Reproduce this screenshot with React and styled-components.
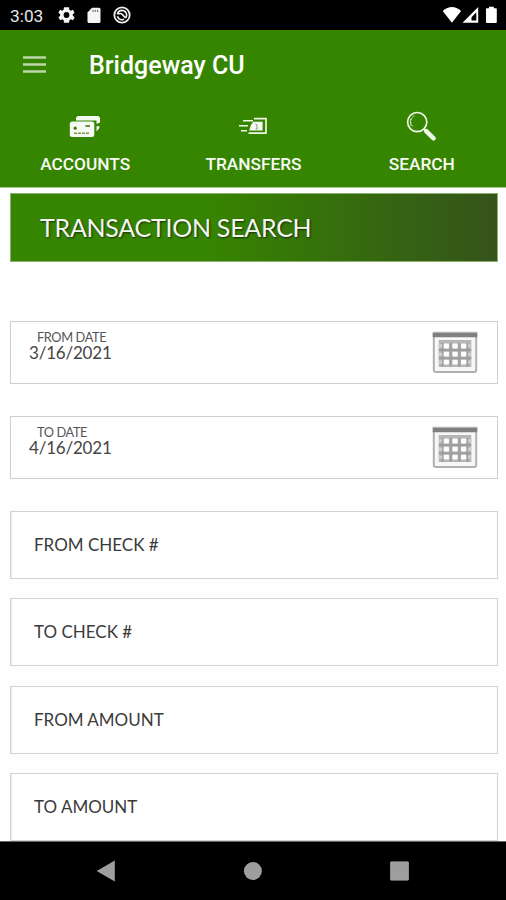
import React from "react";
import styled, { createGlobalStyle } from "styled-components";

const GlobalStyle = createGlobalStyle`
  * { box-sizing: border-box; }
  body { margin: 0; background: #fff; }
  svg { display: block; flex: none; }
`;

const Screen = styled.div`
  width: 506px;
  height: 900px;
  display: flex;
  flex-direction: column;
  overflow: hidden;
  background: #fefefe;
  font-family: Lato, "Liberation Sans", sans-serif;
`;

const StatusBar = styled.div`
  height: 30px;
  flex: none;
  display: flex;
  align-items: center;
  justify-content: space-between;
  padding: 0 8px 0 10px;
  background: #000;
`;

const Clock = styled.span`
  width: 36px;
  padding-top: 2px;
  font: 400 17.3px/20px Roboto, sans-serif;
  color: #e8e8e8;
`;

const StatusGroup = styled.div`
  display: flex;
  align-items: center;
  gap: 12px;
`;

const Header = styled.header`
  height: 158px;
  flex: none;
  background: #368500;
  border-bottom: 1px solid #a9c795;
`;

const TitleRow = styled.div`
  height: 70px;
  display: flex;
  align-items: center;
  padding: 0 23px;
  gap: 43px;
  svg { margin-top: -2px; }
`;

const AppTitle = styled.h1`
  margin: 1px 0 0;
  font: 500 25px/30px Roboto, sans-serif;
  color: #fff;
  white-space: nowrap;
`;

const Tabs = styled.nav`
  display: grid;
  grid-template-columns: repeat(3, 1fr);
  padding-left: 1px;
`;

const Tab = styled.div`
  display: flex;
  flex-direction: column;
  align-items: center;
  padding-top: 8px;
  font: 500 17.3px/20px Roboto, sans-serif;
  color: #f7faf5;
  svg { margin-bottom: 10px; }
`;

const Banner = styled.h2`
  height: 69px;
  flex: none;
  margin: 5px 8px 0 10px;
  padding: 0 29px;
  border: 1px solid #8bb06f;
  background: linear-gradient(90deg, #368500 0%, #368500 40%, #35531b 100%);
  font-weight: 400;
  font-size: 25px;
  line-height: 66px;
  letter-spacing: -0.27px;
  color: #f4f6f2;
  text-shadow: 1px 1px 2px rgba(0, 0, 0, 0.65);
  white-space: nowrap;
`;

const Form = styled.form`
  flex: 1;
  min-height: 0;
  padding: 59px 8px 0 10px;
`;

const DateField = styled.div`
  height: 63px;
  margin-bottom: 32px;
  padding: 0 18px;
  border: 1px solid #cfcfcf;
  background: #fff;
  display: flex;
  align-items: flex-start;
  justify-content: space-between;
  svg { margin-top: 8px; }
`;

const DateLabel = styled.div`
  margin: 8px 0 0 8px;
  font-size: 12.8px;
  line-height: 14px;
  letter-spacing: -0.4px;
  color: #555;
`;

const DateValue = styled.div`
  font-size: 17px;
  line-height: 18px;
  letter-spacing: -0.2px;
  color: #454545;
`;

const TextField = styled.div`
  height: 68px;
  margin-bottom: 19.3px;
  padding-left: 23px;
  border: 1px solid #d2d2d2;
  box-shadow: inset 1px 0 0 #eee;
  background: #fff;
  font-size: 17px;
  line-height: 66px;
  color: #3b3b3b;
`;

const NavBar = styled.footer`
  height: 59px;
  flex: none;
  display: flex;
  align-items: center;
  justify-content: space-between;
  padding: 0 97px 0 96px;
  background: #000;
  border-top: 1px solid #666;
`;

const Gear = () => (
  <svg width="17" height="18" viewBox="2 2 20 20" fill="#f5f5f5">
    <path fillRule="evenodd" d="M19.4 13a7.6 7.6 0 0 0 0-2l2.1-1.6-2-3.5-2.5 1a7.3 7.3 0 0 0-1.7-1L15 3H9l-.4 2.9a7.3 7.3 0 0 0-1.7 1l-2.5-1-2 3.5L4.6 11a7.6 7.6 0 0 0 0 2l-2.1 1.6 2 3.5 2.5-1a7.3 7.3 0 0 0 1.7 1L9 21h6l.4-2.9a7.3 7.3 0 0 0 1.7-1l2.5 1 2-3.5zM12 15.4a3.4 3.4 0 1 1 0-6.8 3.4 3.4 0 0 1 0 6.8" />
  </svg>
);

const SdCard = () => (
  <svg width="14" height="17" viewBox="0 0 14 17">
    <path d="M5 .7h7q1.5 0 1.5 1.5v12.3q0 1.5-1.5 1.5H2q-1.5 0-1.5-1.5V5.5z" fill="#f5f5f5" />
    <path d="M6 2.8v2.3M8.3 2.8v2.3M10.6 2.8v2.3" stroke="#777" strokeWidth="1.2" />
  </svg>
);

const SyncCircle = () => (
  <svg width="18" height="18" viewBox="0 0 18 18" fill="none" stroke="#eee">
    <circle cx="9" cy="9" r="7.7" strokeWidth="1.8" />
    <path d="M4.3 8.3Q5 4.6 9 4.4q4.2.3 4.7 4.7-.2 1.6-1.2 2.9M4.5 10.2q1 3.6 4.8 3.5l1.8-.4M5 8.2q2.3-1.5 4.3.2l3.2 3.6" strokeWidth="1.6" />
  </svg>
);

const SignalIcons = () => (
  <svg width="56" height="18" viewBox="0 0 56 18" fill="#fff">
    <path d="M.7 5.1Q10-3.2 19.1 5.1L9.9 16.7z" />
    <path fillRule="evenodd" d="M36.2 1v15.8H20.5zM34.3 6.3l-4.8 5v3.3h4.8z" />
    <path d="M47 2.3V.8h4.8v1.5H54q.8 0 .8.8v12.8q0 1-.9 1h-9q-.9 0-.9-1V3.1q0-.8.9-.8z" />
  </svg>
);

const Menu = () => (
  <svg width="23" height="17" viewBox="0 0 23 17" fill="none" stroke="#bcd8aa" strokeWidth="2.3">
    <path d="M0 1.5h23M0 8.5h23M0 15.5h23" />
  </svg>
);

const Cards = () => (
  <svg width="32" height="36" viewBox="0 0 32 36">
    <path d="M7 10.5q0-2.5 2.5-2.5h19Q31 8 31 10.5v4.2q-1.7 0-2.5 1h-1v-3.2H7zM27.5 18.3h3.2q-.2 3.2-3.2 5z" fill="#f4f8f0" />
    <rect x=".8" y="13.6" width="24.5" height="15.5" rx="2.5" fill="#f7faf4" />
    <circle cx="6.2" cy="20.2" r="1.6" fill="#397d0b" />
    <path d="M16.5 18h4.5" stroke="#447c1d" strokeWidth="1.7" />
    <path d="M5 25.2h15.5" stroke="#6f984f" strokeWidth="1.4" strokeDasharray="3 1" />
  </svg>
);

const Transfer = () => (
  <svg width="30" height="36" viewBox="0 0 30 36" fill="none" stroke="#eef6e8">
    <path d="M5 12.7h10M1 17.7h9M3 22.8h6" strokeWidth="1.4" />
    <path d="M16 10.7h12v14.5H10.5" strokeWidth="1.7" />
    <path d="M15.2 13.8h9.4v8.7H11.2q.8-5.6 4-8.7z" fill="#f7faf4" stroke="none" />
    <path d="M17.3 15.8l1.7 1v4M17.5 21h2.2" stroke="#79a35f" strokeWidth="1" />
  </svg>
);

const Magnifier = () => (
  <svg width="32" height="36" viewBox="0 0 32 36" fill="none" stroke="#eef6e8">
    <circle cx="11.2" cy="14.1" r="9.6" strokeWidth="1.7" />
    <path d="M5.2 17.8Q2.4 10.8 9 7.4M5 11q-1.5 5 2.8 8" strokeWidth=".9" strokeDasharray="2 1" />
    <path d="M17.9 20.9l2.4 2.3" strokeWidth="2" />
    <path d="M20.2 23.2l7.4 7.2" strokeWidth="4.5" strokeLinecap="round" />
  </svg>
);

const Calendar = () => (
  <svg width="48" height="45" viewBox="0 0 48 45" fill="none">
    <path d="M2.8 4v36q0 2 2 2h38.4q2 0 2-2V4" fill="#f7f7f7" stroke="#b0b0b0" strokeWidth="2" />
    <path d="M1.7 2.5h44.6v4.7H1.7z" fill="#808080" />
    <path d="M1.7 2.4h44.6" stroke="#b4b4b4" strokeWidth="1.2" />
    <path d="M7.7 10h32.6v27H7.7z" fill="#b6b6b6" />
    <path d="M7.7 20h32.6M7.7 28.3h32.6M11.5 13v24M19.7 13v24M28.3 13v24M36.5 13v24" stroke="#9e9e9e" strokeWidth="2" />
    <path d="M7.7 15.8h3.5M7.7 24.2h3.5M7.7 32h3.5M37 15.8h3.3M37 24.2h3.3M37 32h3.3" stroke="#cfcfcf" strokeWidth="3" />
    {[13.6, 21.8, 29.8].map((y) =>
      [12.7, 21.4, 30].map((x) => (
        <rect key={`${x}-${y}`} x={x} y={y} width="5.3" height="4.8" rx="1" fill="#fdfdfd" />
      ))
    )}
  </svg>
);

const BackKey = () => (
  <svg width="19" height="22" viewBox="0 0 19 22">
    <path d="M.7 11L18.8.5v21z" fill="#9e9e9e" />
  </svg>
);

const HomeKey = () => (
  <svg width="19" height="20" viewBox="0 0 19 20">
    <circle cx="9.9" cy="10" r="9" fill="#9e9e9e" />
  </svg>
);

const RecentKey = () => (
  <svg width="19" height="20" viewBox="0 0 19 20">
    <rect x=".3" y=".8" width="18.4" height="18.4" rx="1" fill="#9e9e9e" stroke="#b0b0b0" strokeWidth=".6" />
  </svg>
);

const TABS = [
  { label: "ACCOUNTS", Icon: Cards },
  { label: "TRANSFERS", Icon: Transfer },
  { label: "SEARCH", Icon: Magnifier },
];

const DATES = [
  { label: "FROM DATE", value: "3/16/2021" },
  { label: "TO DATE", value: "4/16/2021" },
];

const FIELDS = ["FROM CHECK #", "TO CHECK #", "FROM AMOUNT", "TO AMOUNT"];

export default function App() {
  return (
    <Screen>
      <GlobalStyle />
      <StatusBar>
        <StatusGroup>
          <Clock>3:03</Clock>
          <Gear />
          <SdCard />
          <SyncCircle />
        </StatusGroup>
        <SignalIcons />
      </StatusBar>
      <Header>
        <TitleRow>
          <Menu />
          <AppTitle>Bridgeway CU</AppTitle>
        </TitleRow>
        <Tabs>
          {TABS.map(({ label, Icon }) => (
            <Tab key={label}>
              <Icon />
              {label}
            </Tab>
          ))}
        </Tabs>
      </Header>
      <Banner>TRANSACTION SEARCH</Banner>
      <Form>
        {DATES.map(({ label, value }) => (
          <DateField key={label}>
            <div>
              <DateLabel>{label}</DateLabel>
              <DateValue>{value}</DateValue>
            </div>
            <Calendar />
          </DateField>
        ))}
        {FIELDS.map((label) => (
          <TextField key={label}>{label}</TextField>
        ))}
      </Form>
      <NavBar>
        <BackKey />
        <HomeKey />
        <RecentKey />
      </NavBar>
    </Screen>
  );
}
